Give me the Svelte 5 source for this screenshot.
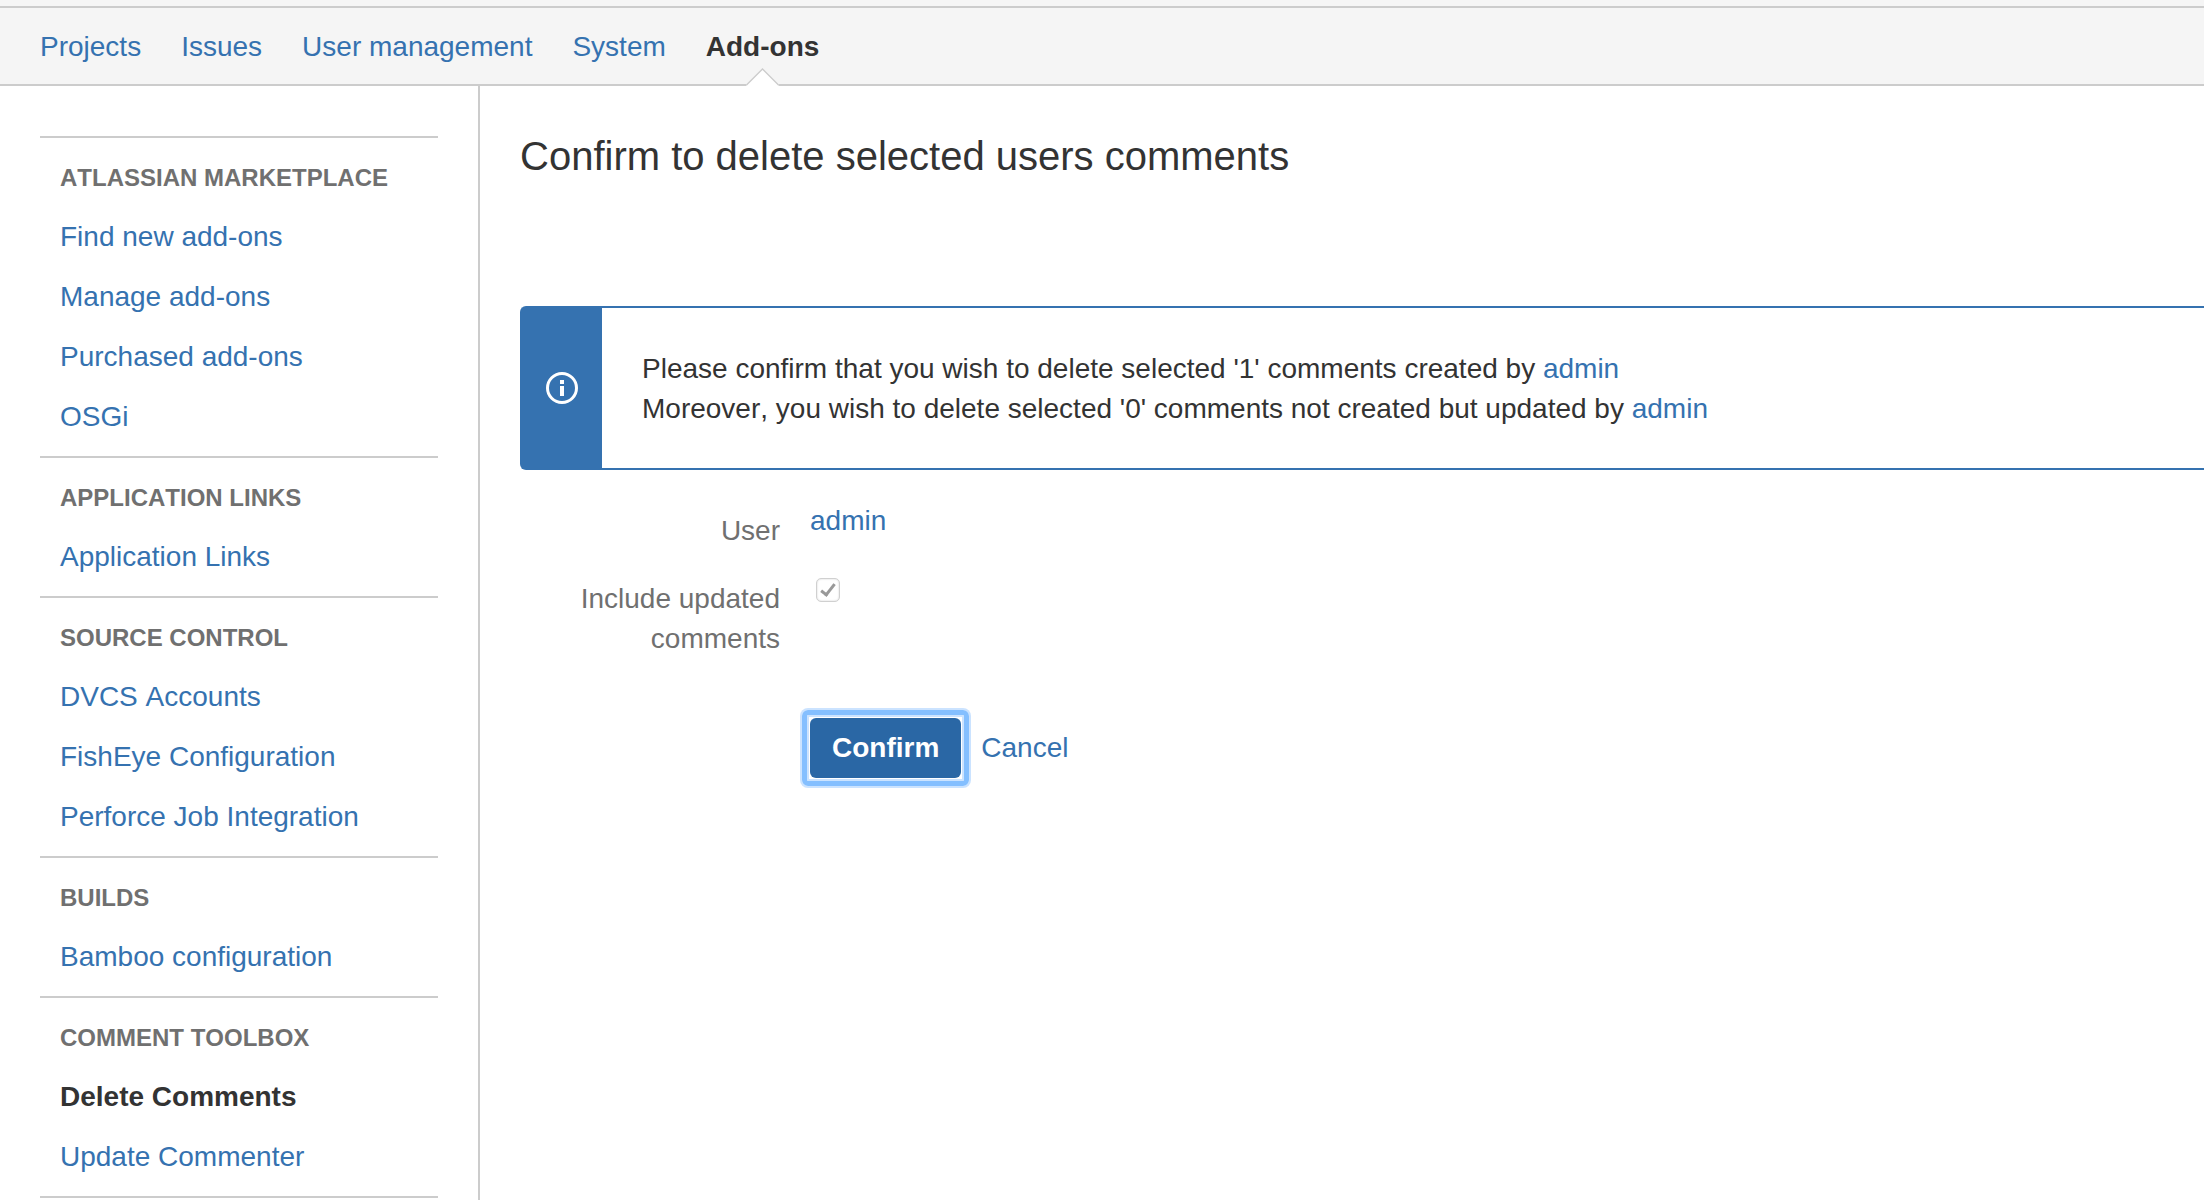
<script>
	const tabs = ['Projects', 'Issues', 'User management', 'System', 'Add-ons']
	const activeTab = 'Add-ons'

	const groups = [
		{
			title: 'Atlassian Marketplace',
			links: ['Find new add-ons', 'Manage add-ons', 'Purchased add-ons', 'OSGi'],
		},
		{ title: 'Application Links', links: ['Application Links'] },
		{
			title: 'Source Control',
			links: ['DVCS Accounts', 'FishEye Configuration', 'Perforce Job Integration'],
		},
		{ title: 'Builds', links: ['Bamboo configuration'] },
		{ title: 'Comment Toolbox', links: ['Delete Comments', 'Update Commenter'] },
	]
	const activeLink = 'Delete Comments'

	let user = 'admin'
	let created = 1
	let updated = 0
</script>

<div class="page">
	<header>
		<nav class="tabs">
			{#each tabs as tab}
				<a href="#top" class:active={tab === activeTab}>
					{tab}
					{#if tab === activeTab}
						<svg class="arrow" viewBox="0 0 34 18" width="34" height="18">
							<path d="M0.5 18 V16.5 L16.5 0.5 L32.5 16.5 V18 Z" fill="#fff" />
							<path d="M0.5 17 L16.5 1 L32.5 17" fill="none" stroke="#ccc" stroke-width="1.4" />
						</svg>
					{/if}
				</a>
			{/each}
		</nav>
	</header>

	<div class="body">
		<aside>
			{#each groups as group}
				<section class="group">
					<h2>{group.title}</h2>
					<ul>
						{#each group.links as link}
							<li><a href="#top" class:active={link === activeLink}>{link}</a></li>
						{/each}
					</ul>
				</section>
			{/each}
			<hr />
		</aside>

		<main>
			<h1>Confirm to delete selected users comments</h1>

			<div class="message">
				<div class="message-icon">
					<svg viewBox="0 0 32 32" width="32" height="32">
						<circle cx="16" cy="16" r="14.5" fill="none" stroke="#fff" stroke-width="3" />
						<path d="M14 8h4v4h-4zM14 14h4v10h-4z" fill="#fff" />
					</svg>
				</div>
				<p>
					Please confirm that you wish to delete selected '{created}' comments created by <a href="#top">{user}</a><br />
					Moreover, you wish to delete selected '{updated}' comments not created but updated by <a href="#top">{user}</a>
				</p>
			</div>

			<form on:submit|preventDefault>
				<div class="field">
					<span class="label">User</span>
					<a href="#top">{user}</a>
				</div>
				<div class="field">
					<label class="label" for="include">Include updated comments</label>
					<input id="include" type="checkbox" checked disabled />
				</div>
				<div class="buttons">
					<button type="submit">Confirm</button>
					<a href="#top">Cancel</a>
				</div>
			</form>
		</main>
	</div>
</div>

<style>
	:global(body) {
		background: #fff;
		color: #333;
		font: 28px/40px "Liberation Sans", Arial, sans-serif;
		font-kerning: none;
	}
	a {
		color: #3572b0;
		text-decoration: none;
	}
	a.active {
		color: #333;
		font-weight: bold;
	}
	.page {
		display: flex;
		flex-direction: column;
		min-height: 100vh;
	}

	header {
		background: #f5f5f5;
		padding-top: 6px;
	}
	.tabs {
		display: flex;
		gap: 40px;
		padding: 0 40px;
		border-top: 2px solid #ccc;
		border-bottom: 2px solid #ccc;
	}
	.tabs a {
		position: relative;
		padding: 19px 0 17px;
	}
	/* sits over the bottom border of the bar */
	.arrow {
		position: absolute;
		left: 50%;
		bottom: -2px;
		margin-left: -17px;
	}

	.body {
		display: flex;
		flex: 1;
	}
	aside {
		box-sizing: border-box;
		width: 480px;
		flex: none;
		padding: 50px 40px 0;
		border-right: 2px solid #ccc;
	}
	.group {
		padding: 20px 20px 10px;
		border-top: 2px solid #ccc;
	}
	hr {
		margin: 0;
		border: 0;
		border-top: 2px solid #ccc;
	}
	h2 {
		margin: 0 0 8px;
		color: #707070;
		font-size: 24px;
		text-transform: uppercase;
	}
	ul {
		margin: 0;
		padding: 0;
		list-style: none;
	}
	li {
		padding: 11px 0 9px;
	}

	main {
		flex: 1;
		padding: 40px 0 0 40px;
	}
	h1 {
		margin: 0 0 120px;
		font-size: 40px;
		font-weight: normal;
		line-height: 60px;
	}
	.message {
		display: flex;
		border: 2px solid #3572b0;
		border-right: 0;
		border-radius: 6px 0 0 6px;
	}
	.message-icon {
		display: flex;
		align-items: center;
		justify-content: center;
		width: 80px;
		background: #3572b0;
	}
	p {
		margin: 0;
		padding: 41px 40px 39px;
	}

	form {
		padding-top: 31px;
	}
	.field {
		display: flex;
		gap: 30px;
		margin-bottom: 18px;
	}
	.label {
		width: 260px;
		padding-top: 10px;
		color: #707070;
		text-align: right;
	}
	input {
		appearance: none;
		width: 24px;
		height: 24px;
		margin: 9px 6px;
		border: 1px solid #d0d0d0;
		border-radius: 5px;
		background: #fff;
		box-shadow: inset 0 0 2px #ccc;
	}
	input:checked::before {
		content: "";
		display: block;
		width: 5px;
		height: 12px;
		margin: 2px 7px;
		border: solid #999;
		border-width: 0 3px 3px 0;
		transform: rotate(38deg);
	}
	.buttons {
		display: flex;
		align-items: center;
		gap: 20px;
		padding: 41px 0 0 290px;
	}
	button {
		position: relative;
		padding: 10px 22px;
		border: 0;
		border-radius: 6px;
		background: #2a67a5;
		color: #fff;
		font: inherit;
		font-weight: bold;
	}
	/* focus ring */
	button::before {
		content: "";
		position: absolute;
		inset: -8px;
		border: 5px solid #84bfff;
		border-radius: 6px;
		box-shadow: 0 0 0 2px #cbe3ff, inset 0 0 0 2px #cbe3ff;
	}
</style>
